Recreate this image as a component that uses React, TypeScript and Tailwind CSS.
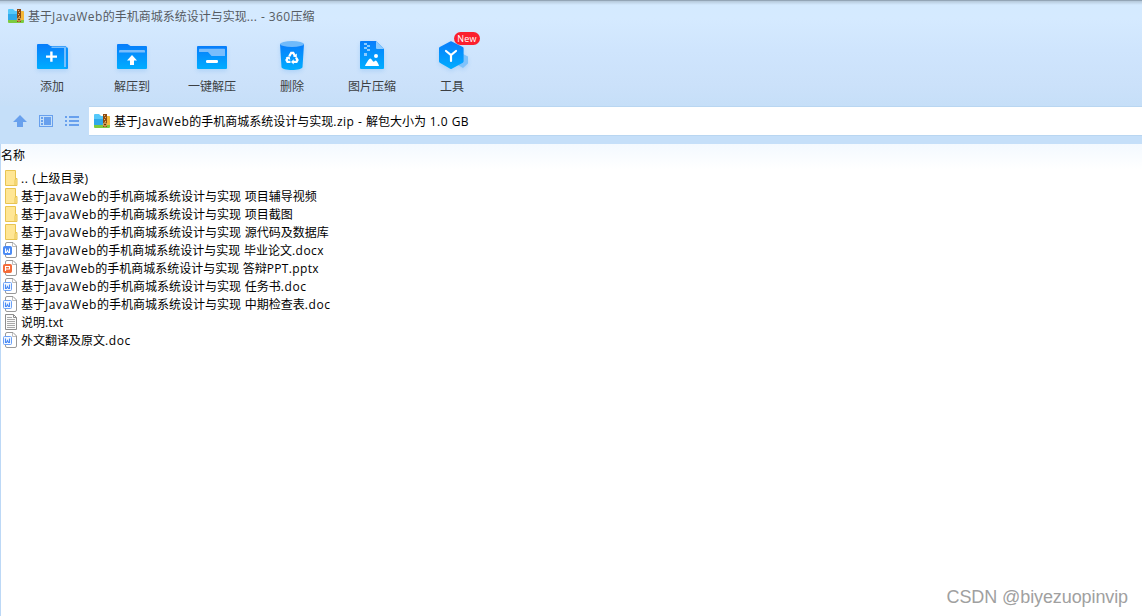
import type { ReactNode } from "react";

const FONT = "font-['Open_Sans','Noto_Sans_CJK_SC',sans-serif]";

function Label({ text, latin = "tracking-[0.5px]" }: { text: string; latin?: string }) {
  const runs = text.split(/([\x20-\x7e]+)/).filter(Boolean);
  return (
    <span className="relative top-px whitespace-pre">
      {runs.map((run, i) =>
        /^[\x20-\x7e]/.test(run) ? <span key={i} className={latin}>{run}</span> : run,
      )}
    </span>
  );
}

function ZipIcon() {
  return (
    <svg width="16" height="14" viewBox="0 0 16 14" className="shrink-0">
      <path d="M0 1a1 1 0 0 1 1-1h4l2 2h8a1 1 0 0 1 1 1v8H0z" fill="#55c8fa" />
      <path d="M0 5h16v6H0z" fill="#2fa9ea" />
      <path d="M13 2h2a1 1 0 0 1 1 1v8h-3z" fill="#f5b83a" />
      <path d="M0 11h16v2a1 1 0 0 1-1 1H1a1 1 0 0 1-1-1z" fill="#7ccb3f" />
      <rect x="9" y="0" width="4" height="13" fill="#8d4b13" />
      <path d="M10 1h1v1h-1zM11 3h1v1h-1zM10 5h1v1h-1zM11 7h1v1h-1z" fill="#e8b468" />
      <circle cx="11" cy="10.500" r="1.600" fill="#6b3508" stroke="#ffd77a" strokeWidth=".9" />
    </svg>
  );
}

function ToolSvg({ children }: { children: ReactNode }) {
  return (
    <svg width="40" height="40" viewBox="0 0 40 40" className="drop-shadow-[0_2px_2px_rgba(0,120,230,0.15)]">
      {children}
    </svg>
  );
}

function AddIcon() {
  return (
    <ToolSvg>
      <path d="M33 15.500h2a1 1 0 0 1 1 1V36a1 1 0 0 1-1 1h-3z" fill="#0b94fb" />
      <path d="M5 13a1 1 0 0 1 1-1h9.500l3 2H33a1.500 1.500 0 0 1 1.500 1.500V37H6a1 1 0 0 1-1-1z" fill="url(#blue)" />
      <path d="M19.500 14.500H33a1 1 0 0 1 1 1V35h-2V16H19.500z" fill="#76bffd" />
      <path d="M18.200 19.500h2.400v4h4.400v2.200h-4.400v4h-2.400v-4H14v-2.200h4.200z" fill="#fff" />
    </ToolSvg>
  );
}

function ExtractIcon() {
  return (
    <ToolSvg>
      <path d="M5 13a1 1 0 0 1 1-1h9.500l3 2H34a1 1 0 0 1 1 1v21a1 1 0 0 1-1 1H6a1 1 0 0 1-1-1z" fill="url(#blue)" />
      <path d="M7 20.500v-1.500a1 1 0 0 1 1-1h24a1 1 0 0 1 1 1v1.500z" fill="#79bdfc" />
      <path d="M20 23l5 5.500h-3V33h-4v-4.500h-3z" fill="#fff" />
    </ToolSvg>
  );
}

function QuickExtractIcon() {
  return (
    <ToolSvg>
      <rect x="5" y="14" width="30" height="23" rx="1" fill="url(#blue)" />
      <path d="M7 17.500a.7.700 0 0 1 .7-.700H32.300a.7.700 0 0 1 .7.700V24H19.500l-3.500-4H7z" fill="#79bdfc" />
      <rect x="14" y="28" width="12" height="3" rx="1.200" fill="#fff" />
    </ToolSvg>
  );
}

function DeleteIcon() {
  return (
    <ToolSvg>
      <path d="M8 12h24l-1.500 23c-.2 4-20.800 4-21 0z" fill="url(#blue)" />
      <ellipse cx="20" cy="12" rx="12" ry="3" fill="#70bafb" />
      <g fill="none" stroke="#fff" strokeWidth="2.300">
        <path d="M17.300 24.200l1.900-3.300h2l1.700 2.900" />
        <path d="M24 25.500l1.500 2.600-1 1.800h-3.500" />
        <path d="M18.500 29.900h-3l-1-1.800 1.400-2.400" />
      </g>
      <path d="M21 24.600l3.800 1v-4zM21.700 27.300v5.200l-2.700-2.600zM13.700 25.200l3.900-1 .7 3.800z" fill="#fff" />
    </ToolSvg>
  );
}

function PictureIcon() {
  return (
    <ToolSvg>
      <path d="M8 10a1 1 0 0 1 1-1h15l8 8v19a1 1 0 0 1-1 1H9a1 1 0 0 1-1-1z" fill="url(#blue)" />
      <path d="M24 9l8 8h-7a1 1 0 0 1-1-1z" fill="#8ccbff" />
      <path d="M12 11h3v2h-3zM15 13h3v2h-3zM12 15h3v2h-3zM15 17h3v2h-3zM12 21h3v3h-3z" fill="#8ccbff" />
      <circle cx="24" cy="24" r="2" fill="#fff" />
      <path d="M13 34c0-1 4-7.500 5.300-7.500 1.100 0 2.400 3.200 3.400 3.200s1.300-1.200 2-1.200c1.200 0 3.300 4.500 3.300 5.500z" fill="#fff" />
    </ToolSvg>
  );
}

function ToolsIcon() {
  return (
    <ToolSvg>
      <path d="M31 22l5 2.500v7L31 36l-6-3.500v-7z" fill="#7fc2fb" />
      <path d="M18.200 9.400a1.600 1.600 0 0 1 1.600 0l11 5.600a1.600 1.600 0 0 1 .8 1.400v12.900a1.600 1.600 0 0 1-.8 1.400l-11 6a1.600 1.600 0 0 1-1.600 0l-10.400-6a1.600 1.600 0 0 1-.8-1.400V16.400a1.600 1.600 0 0 1 .8-1.400z" fill="url(#blue)" />
      <path d="M14 19l5 4 5-4M19 23v6" fill="none" stroke="#fff" strokeWidth="2.200" strokeLinecap="round" />
    </ToolSvg>
  );
}

const TOOLS: { label: string; icon: ReactNode; isNew?: boolean }[] = [
  { label: "添加", icon: <AddIcon /> },
  { label: "解压到", icon: <ExtractIcon /> },
  { label: "一键解压", icon: <QuickExtractIcon /> },
  { label: "删除", icon: <DeleteIcon /> },
  { label: "图片压缩", icon: <PictureIcon /> },
  { label: "工具", icon: <ToolsIcon />, isNew: true },
];

type Kind = "folder" | "docx" | "pptx" | "doc" | "txt";

const BASE = "基于JavaWeb的手机商城系统设计与实现";

const FILES: [Kind, string][] = [
  ["folder", ".. (上级目录)"],
  ["folder", `${BASE} 项目辅导视频`],
  ["folder", `${BASE} 项目截图`],
  ["folder", `${BASE} 源代码及数据库`],
  ["docx", `${BASE} 毕业论文.docx`],
  ["pptx", `${BASE} 答辩PPT.pptx`],
  ["doc", `${BASE} 任务书.doc`],
  ["doc", `${BASE} 中期检查表.doc`],
  ["txt", "说明.txt"],
  ["doc", "外文翻译及原文.doc"],
];

const LATIN: Record<Kind, string> = {
  folder: "tracking-[0.6px]",
  docx: "tracking-[0.5px]",
  pptx: "tracking-[0.35px]",
  doc: "tracking-[0.6px]",
  txt: "tracking-[0.1px]",
};

function FileIcon({ kind }: { kind: Kind }) {
  if (kind === "folder") {
    return (
      <svg width="18" height="18" viewBox="0 0 18 18" className="shrink-0">
        <path d="M5.500 1.500h10v15h-10z" fill="#ffe694" stroke="#e8c451" />
        <path d="M15.500 9.500h1.500v7h-2v-5z" fill="#ffe694" stroke="#e8c451" />
      </svg>
    );
  }
  if (kind === "txt") {
    return (
      <svg width="18" height="18" viewBox="0 0 18 18" className="shrink-0">
        <path d="M5.500 1.500h8l3 3v12h-11z" fill="#fafafa" stroke="#8d8d8d" />
        <path d="M13.500 1.500v3h3" fill="none" stroke="#8d8d8d" />
        <path d="M7 4.500h5M7 6.500h8M7 8.500h8M7 10.500h8M7 12.500h8M7 14.500h8" stroke="#a8a8a8" />
      </svg>
    );
  }
  const outlined = kind === "doc";
  const color = kind === "pptx" ? "#f46b38" : "#4a8af4";
  return (
    <svg width="18" height="18" viewBox="0 0 18 18" className="shrink-0">
      <path d="M5.500 3A1.500 1.500 0 0 1 7 1.500h6l3.500 3.500v10a1.500 1.500 0 0 1-1.500 1.500H7A1.500 1.500 0 0 1 5.500 15z" fill="#fff" stroke="#999" />
      <path d="M12.500 2v3.500H16" fill="none" stroke="#bdbdbd" />
      <rect x="3.500" y="5.500" width="8" height="8" rx="1" fill={outlined ? "#f3f8ff" : color} stroke={outlined ? "#6ba1f7" : color} />
      {kind === "pptx" ? (
        <path d="M5.500 12V7.500h4v2.500h-4" fill="none" stroke="#fff" strokeWidth="1.100" />
      ) : (
        <path d="M5.500 7.500v4h1l1-2 1 2h1v-4" fill="none" stroke={outlined ? color : "#fff"} strokeWidth="1.100" />
      )}
    </svg>
  );
}

export default function App() {
  return (
    <div className={`${FONT} relative flex h-[616px] w-[1142px] flex-col overflow-hidden bg-white text-[12px] leading-[18px] text-black`}>
      <svg width="0" height="0" className="absolute">
        <defs>
          <linearGradient id="blue" x1="0" y1="0" x2="0" y2="1">
            <stop offset="0" stopColor="#087dfb" />
            <stop offset="1" stopColor="#00adff" />
          </linearGradient>
        </defs>
      </svg>

      <header className="flex h-[106px] shrink-0 flex-col bg-[linear-gradient(#93a5b6_0,#93a5b6_1px,#b4c8da_1px,#c4d9ec_3px,#d4eaff_5px,#d5eaff_18px,#cfe5fd_50px,#cbe1fa_85px,#c6dff8_106px)]">
        <div className="flex h-8 items-center gap-1 pl-2 text-[#555b62]">
          <ZipIcon />
          <Label text="基于JavaWeb的手机商城系统设计与实现... - 360压缩" latin="tracking-[0.42px]" />
        </div>
        <nav className="flex pl-3 text-[#3c3f43]">
          {TOOLS.map((t) => (
            <div key={t.label} className="relative flex w-20 flex-col items-center gap-[5px]">
              {t.icon}
              <Label text={t.label} />
              {t.isNew && (
                <span className="absolute top-0 left-[42px] h-[13px] w-[26px] rounded-full bg-[#fb1f2d] text-center text-[9px] leading-[13px] tracking-[0.2px] text-white">
                  New
                </span>
              )}
            </div>
          ))}
        </nav>
      </header>

      <div className="flex h-[38px] shrink-0 bg-[#c5dff9]">
        <div className="flex h-[30px] w-[89px] items-center gap-3 pl-[13px]">
          <svg width="14" height="12" viewBox="0 0 14 12" fill="#68a0ed">
            <path d="M7 0l7 7h-4v5H4V7H0z" />
          </svg>
          <svg width="14" height="12" viewBox="0 0 14 12" fill="#68a0ed">
            <path d="M0 0h14v12H0zM1 1v10h12V1z" fillRule="evenodd" />
            <path d="M2 2h2v2H2zM2 5h2v2H2zM2 8h2v2H2zM5 2h7v8H5z" />
          </svg>
          <svg width="14" height="12" viewBox="0 0 14 12" fill="#68a0ed">
            <path d="M0 1h2v2H0zM4 1h10v2H4zM0 5h2v2H0zM4 5h10v2H4zM0 9h2v2H0zM4 9h10v2H4z" />
          </svg>
        </div>
        <div className="flex h-[30px] flex-1 items-center gap-1 border-y border-[#b9d6f1] bg-white pl-[5px]">
          <ZipIcon />
          <Label text={`${BASE}.zip - 解包大小为 1.0 GB`} />
        </div>
      </div>

      <main className="flex-1 border-l border-[#bcd8f6]">
        <div className="h-[25px] bg-linear-to-b from-[#f3f9ff] to-white pt-[2px]">
          <Label text="名称" />
        </div>
        <ul>
          {FILES.map(([kind, name]) => (
            <li key={name} className="flex h-[18px] items-center gap-[3px]">
              <span className="-ml-px flex">
                <FileIcon kind={kind} />
              </span>
              <Label text={name} latin={LATIN[kind]} />
            </li>
          ))}
        </ul>
      </main>

      <div className="absolute right-[14px] bottom-[7px] font-['Liberation_Sans',sans-serif] text-[18px] leading-[24px] tracking-[-0.1px] text-[#a0a0a0]">
        CSDN @biyezuopinvip
      </div>
    </div>
  );
}
